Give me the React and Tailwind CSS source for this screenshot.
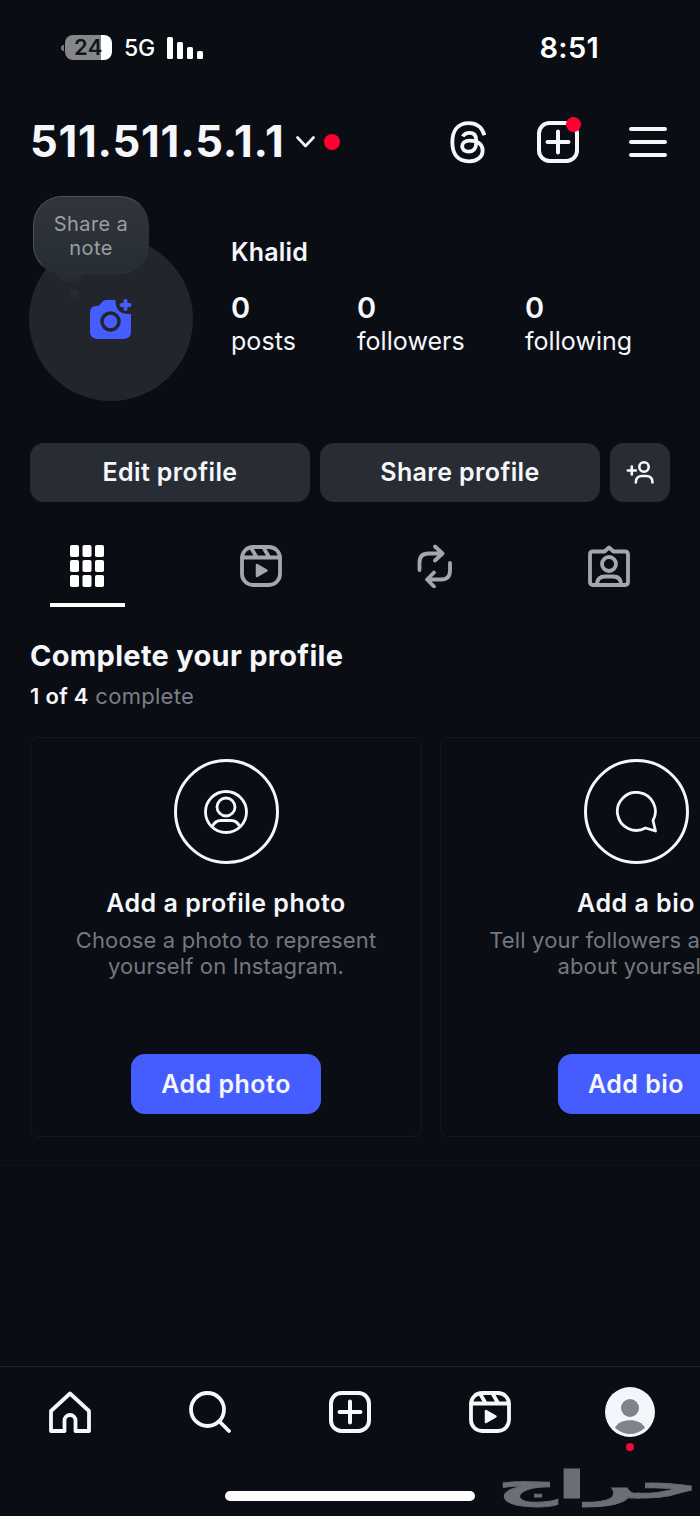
import { clsx } from "clsx";

const stats = [
  { value: "0", label: "posts", width: "w-[126px]" },
  { value: "0", label: "followers", width: "w-[168px]" },
  { value: "0", label: "following", width: "w-[140px]" },
];

function ThreadsIcon() {
  return (
    <svg width="40" height="44" viewBox="54 299 120 132" fill="none" stroke="currentColor" strokeWidth="11.500">
      <path d="M163 345C156 320 140 308.500 117 308.500C84 308.500 67 330 67 366C67 402 84 423 117 423C142 423 158 409 158 391C158 371 141 361 119 361C105 361 96.500 368 96.500 378C96.500 388 105 394 116 394C130 394 138.500 385 138.500 369V359C138.500 345 131 337.500 118.500 337.500C109 337.500 102 341 98.500 348.500" />
    </svg>
  );
}

function PlusSquareIcon() {
  return (
    <svg width="42" height="42" viewBox="0 0 42 42" fill="none" stroke="currentColor" strokeWidth="4" strokeLinecap="round">
      <rect x="2" y="2" width="38" height="38" rx="10.500" />
      <path d="M21 10.500v21M10.500 21h21" />
    </svg>
  );
}

function ReelsIcon() {
  return (
    <svg width="42" height="42" viewBox="0 0 42 42" fill="none" stroke="currentColor" strokeWidth="3.800" strokeLinecap="round" strokeLinejoin="round">
      <rect x="2" y="2" width="38" height="38" rx="11" />
      <path d="M2.500 12.500h37M11.500 3.500l5 8.500M23.500 2.500l5.500 9.500" />
      <path d="M17 20v11l9.500-5.500z" fill="currentColor" strokeWidth="2.500" />
    </svg>
  );
}

function GridIcon() {
  const cells = [0, 1, 2];
  return (
    <svg width="34" height="42" viewBox="0 0 34 42" fill="currentColor">
      {cells.map((row) =>
        cells.map((col) => (
          <rect key={`${row}-${col}`} x={col * 12.5} y={row * 15} width="9" height="12" rx="1.800" />
        ))
      )}
    </svg>
  );
}

function RepostIcon() {
  return (
    <svg width="36" height="44" viewBox="0 0 36 44" fill="none" stroke="currentColor" strokeWidth="3.800" strokeLinecap="round" strokeLinejoin="round">
      <path d="M2.500 26V18.500Q2.500 9.500 11.500 9.500H25M18 2.500l7.500 7-7.500 7" />
      <path d="M33 19v7.500Q33 35.500 24 35.500H10.500M17 28.500l-7 7 7 7" />
    </svg>
  );
}

function TaggedIcon() {
  return (
    <svg width="42" height="42" viewBox="0 0 42 42" fill="none" stroke="currentColor" strokeWidth="3.800" strokeLinecap="round" strokeLinejoin="round">
      <path d="M5 6.500H16.500L21 2.500L25.500 6.500H37Q40 6.500 40 9.500V37Q40 40 37 40H5Q2 40 2 37V9.500Q2 6.500 5 6.500Z" />
      <circle cx="21" cy="19" r="7" />
      <path d="M9 39.500C9 34 12 31.500 17 31.500H25C30 31.500 33 34 33 39.500" />
    </svg>
  );
}

function AddPersonIcon() {
  return (
    <svg width="28" height="24" viewBox="0 0 28 24" fill="none" stroke="currentColor" strokeWidth="2.600" strokeLinecap="round">
      <path d="M5.800 5.500v8M1.800 9.500h8" />
      <circle cx="18" cy="6" r="4.700" />
      <path d="M9.800 21.500C9.800 17 12.500 15 16 15H20C24 15 26.500 17 26.500 21.500" />
    </svg>
  );
}

function CameraIcon() {
  return (
    <svg width="44" height="42" viewBox="0 0 44 42">
      <path
        fill="#455dff"
        d="M1 15Q1 8 7 8Q10 8 12 5.500L13.500 3.500Q15 2 17 2H26.500V4Q27 15 38 16H42V33.500Q42 41 34 41H9Q1 41 1 33.500Z"
      />
      <circle cx="21.500" cy="23.500" r="8.500" fill="#455dff" stroke="#22252c" strokeWidth="3.500" />
      <path d="M36.500 3v8M32.500 7h8" stroke="#455dff" strokeWidth="4" strokeLinecap="round" />
    </svg>
  );
}

function ProfileCircleIcon() {
  return (
    <svg width="44" height="44" viewBox="0 0 44 44" fill="none" stroke="currentColor" strokeWidth="2.800">
      <circle cx="22" cy="22" r="20.500" />
      <circle cx="22" cy="17" r="9" />
      <path d="M8 37C10 32.500 13 30.500 17 30.500H27C31 30.500 34 32.500 36 37" />
    </svg>
  );
}

function CommentIcon() {
  return (
    <svg width="42" height="42" viewBox="0 0 42 42" fill="none" stroke="currentColor" strokeWidth="2.800" strokeLinejoin="round">
      <path d="M38 29.500A19 19 0 1 0 30.500 37L40.500 40Z" />
    </svg>
  );
}

function StatusBar() {
  return (
    <div className="flex h-[95px] items-center pl-[61px] text-white">
      <div className="h-[6px] w-[3px] rounded-l-full bg-[#77797e]" />
      <div className="ml-px flex h-[25px] w-[47px] items-center justify-center rounded-[8px] bg-[linear-gradient(90deg,#85878b_76%,#ffffff_76%)] text-[22px] font-semibold tracking-[0.4px] text-[#11141a]">
        24
      </div>
      <span className="ml-[12px] w-[32px] pt-[2px] text-[23px] font-medium tracking-[-0.2px]">5G</span>
      <div className="ml-[11px] flex h-[22px] items-end gap-[4px]">
        <div className="h-[22px] w-[6px] rounded-[1.5px] bg-white" />
        <div className="h-[17px] w-[6px] rounded-[1.5px] bg-white" />
        <div className="h-[12px] w-[6px] rounded-[1.5px] bg-white" />
        <div className="h-[8px] w-[6px] rounded-[1.5px] bg-white" />
      </div>
      <span className="ml-auto mr-[101px] text-[29px] font-semibold tracking-[0.3px]">8:51</span>
    </div>
  );
}

function Header() {
  return (
    <header className="flex h-[94px] items-center pl-[30px] pr-[33px]">
      <h1 className="w-[257px] whitespace-nowrap text-[43.5px] font-bold tracking-[0.75px]">511.511.5.1.1</h1>
      <svg className="ml-[9px]" width="20" height="12" viewBox="0 0 20 12" fill="none" stroke="currentColor" strokeWidth="2.600" strokeLinecap="round" strokeLinejoin="round">
        <path d="M1.500 1.500L9.500 10L17.500 1.500" />
      </svg>
      <div className="ml-[8px] h-[16px] w-[16px] rounded-full bg-[#ff0030]" />
      <div className="ml-auto flex items-center">
        <ThreadsIcon />
        <div className="relative ml-[49px]">
          <PlusSquareIcon />
          <div className="absolute -right-[2px] -top-[4px] h-[15px] w-[15px] rounded-full bg-[#ff0030]" />
        </div>
        <div className="ml-[50px] flex w-[38px] flex-col gap-[9px]">
          <div className="h-[4px] rounded-full bg-current" />
          <div className="h-[4px] rounded-full bg-current" />
          <div className="h-[4px] rounded-full bg-current" />
        </div>
      </div>
    </header>
  );
}

function ProfileSummary() {
  return (
    <section className="flex h-[254px] pl-[29px]">
      <div className="relative mt-[48px] h-[164px] w-[164px] rounded-full bg-[#22252c]">
        <div className="flex h-full items-center justify-center">
          <CameraIcon />
        </div>
        <div className="absolute left-[28px] top-[23px] h-[22px] w-[26px] rounded-full bg-[#272c33]" />
        <div className="absolute left-[41px] top-[52px] h-[9px] w-[9px] rounded-full bg-[#272c33]" />
        {/* note bubble overlaps the avatar */}
        <div className="absolute -top-[41px] left-[4px] flex h-[78px] w-[116px] items-center justify-center rounded-[29px] border border-[#2c3137] border-l-[#4c5156] border-t-[#4c5156] bg-linear-to-b from-[#30353a] to-[#262d34] pt-[2px] text-center text-[20px] leading-[24px] tracking-[0.4px] text-[#9a9ea4]">
          Share a
          <br />
          note
        </div>
      </div>
      <div className="ml-[38px] mt-[48px]">
        <h2 className="text-[25px] font-semibold leading-[30px] tracking-[0.2px]">Khalid</h2>
        <div className="mt-[24px] flex">
          {stats.map((s) => (
            <div key={s.label} className={s.width}>
              <p className="text-[29px] font-semibold leading-[34px]">{s.value}</p>
              <p className="text-[25px] leading-[33px] tracking-[0.05px]">{s.label}</p>
            </div>
          ))}
        </div>
      </div>
    </section>
  );
}

function ProfileActions() {
  return (
    <div className="flex gap-[10px] px-[30px] text-[25px] font-semibold tracking-[0.4px]">
      <button className="h-[59px] w-[280px] rounded-[14px] bg-[#282d35] pt-px">Edit profile</button>
      <button className="h-[59px] w-[280px] rounded-[14px] bg-[#282d35] pt-px">Share profile</button>
      <button className="flex h-[59px] w-[60px] items-center justify-center rounded-[14px] bg-[#282d35]">
        <AddPersonIcon />
      </button>
    </div>
  );
}

function ProfileTabs() {
  const tabs = [GridIcon, ReelsIcon, RepostIcon, TaggedIcon];

  return (
    <div className="grid h-[105px] grid-cols-4 pr-[4px] pt-[42px]">
      {tabs.map((Icon, idx) => (
        <div
          key={idx}
          className={clsx(
            "flex h-[63px] flex-col items-center",
            idx === 0 ? "text-white" : "text-[#a3a7b0]"
          )}
        >
          <div className="flex h-[44px] items-center">
            <Icon />
          </div>
          {idx === 0 && <div className="mt-auto h-[4px] w-[75px] bg-white" />}
        </div>
      ))}
    </div>
  );
}

function SetupCard({ icon, title, lines, action, buttonWidth }) {
  return (
    <div className="flex h-[400px] w-[392px] shrink-0 flex-col items-center rounded-[8px] border border-[#15191f] pt-[21px]">
      <div className="flex h-[105px] w-[105px] items-center justify-center rounded-full border-[3px] border-[#f5f7fa]">
        {icon}
      </div>
      <h3 className="mt-[24px] text-[25px] font-semibold leading-[30px] tracking-[0.5px]">{title}</h3>
      <p className="mt-[9px] whitespace-nowrap text-center text-[22px] leading-[26px] tracking-[0.15px] text-[#74787f]">
        {lines[0]}
        <br />
        {lines[1]}
      </p>
      <button className={clsx("mb-[22px] mt-auto h-[60px] rounded-[14px] bg-[#455dff] pt-[2px] text-[25px] font-semibold tracking-[0.5px]", buttonWidth)}>
        {action}
      </button>
    </div>
  );
}

function CompleteProfile() {
  return (
    <section className="h-[559px] border-b border-[#10141a] pt-[31px]">
      <h2 className="pl-[30px] text-[29px] font-bold leading-[36px] tracking-[0.3px]">Complete your profile</h2>
      <p className="mt-[8px] pl-[30px] text-[22px] leading-[28px] tracking-[0.3px] text-[#7b7f86]">
        <span className="font-semibold text-[#f5f7fa]">1 of 4</span> complete
      </p>
      <div className="mt-[27px] flex gap-[18px] overflow-hidden pl-[30px]">
        <SetupCard
          icon={<ProfileCircleIcon />}
          title="Add a profile photo"
          lines={["Choose a photo to represent", "yourself on Instagram."]}
          action="Add photo"
          buttonWidth="w-[190px]"
        />
        <SetupCard
          icon={<CommentIcon />}
          title="Add a bio"
          lines={["Tell your followers a little bit", "about yourself."]}
          action="Add bio"
          buttonWidth="w-[156px]"
        />
      </div>
    </section>
  );
}

function BottomNav() {
  return (
    <nav className="relative mt-auto h-[150px] border-t border-[#1d2128]">
      <div className="grid grid-cols-5 justify-items-center pt-[20px]">
        <div className="flex h-[50px] items-center">
          <svg width="42" height="42" viewBox="0 0 42 42" fill="none" stroke="currentColor" strokeWidth="3.800" strokeLinejoin="round">
            <path d="M2 20L21 2.500L40 20V40H26.500V29.500A5.500 5.500 0 0 0 15.500 29.500V40H2Z" />
          </svg>
        </div>
        <div className="flex h-[50px] items-center">
          <svg width="42" height="42" viewBox="0 0 42 42" fill="none" stroke="currentColor" strokeWidth="3.800" strokeLinecap="round">
            <circle cx="18.500" cy="18.500" r="16.500" />
            <path d="M30.500 30.500L40 40" />
          </svg>
        </div>
        <div className="flex h-[50px] items-center">
          <PlusSquareIcon />
        </div>
        <div className="flex h-[50px] items-center">
          <ReelsIcon />
        </div>
        <div className="flex flex-col items-center">
          <svg width="50" height="50" viewBox="0 0 50 50">
            <circle cx="25" cy="25" r="25" fill="#f3f6fa" />
            <circle cx="25" cy="21" r="9" fill="#80838c" />
            <path d="M10 41C14 30.500 36 30.500 40 41Q25 53 10 41Z" fill="#80838c" />
          </svg>
          <div className="mt-[6px] h-[8px] w-[8px] rounded-full bg-[#f00b30]" />
        </div>
      </div>
      <div className="absolute left-[225px] top-[124px] h-[10px] w-[250px] rounded-full bg-white" />
      <span
        dir="rtl"
        lang="ar"
        className="absolute right-[2px] top-[93px] origin-right scale-x-[2.2] whitespace-nowrap font-['DejaVu_Sans',sans-serif] text-[38px] font-bold leading-[50px] text-[#6b6e75] [-webkit-text-stroke:0.8px_#6b6e75]"
      >
        حراج
      </span>
    </nav>
  );
}

export default function App() {
  return (
    <div className="flex h-[1516px] w-[700px] flex-col overflow-hidden bg-[#0a0d14] font-['Inter',sans-serif] text-[#f5f7fa]">
      <StatusBar />
      <Header />
      <ProfileSummary />
      <ProfileActions />
      <ProfileTabs />
      <CompleteProfile />
      <BottomNav />
    </div>
  );
}
